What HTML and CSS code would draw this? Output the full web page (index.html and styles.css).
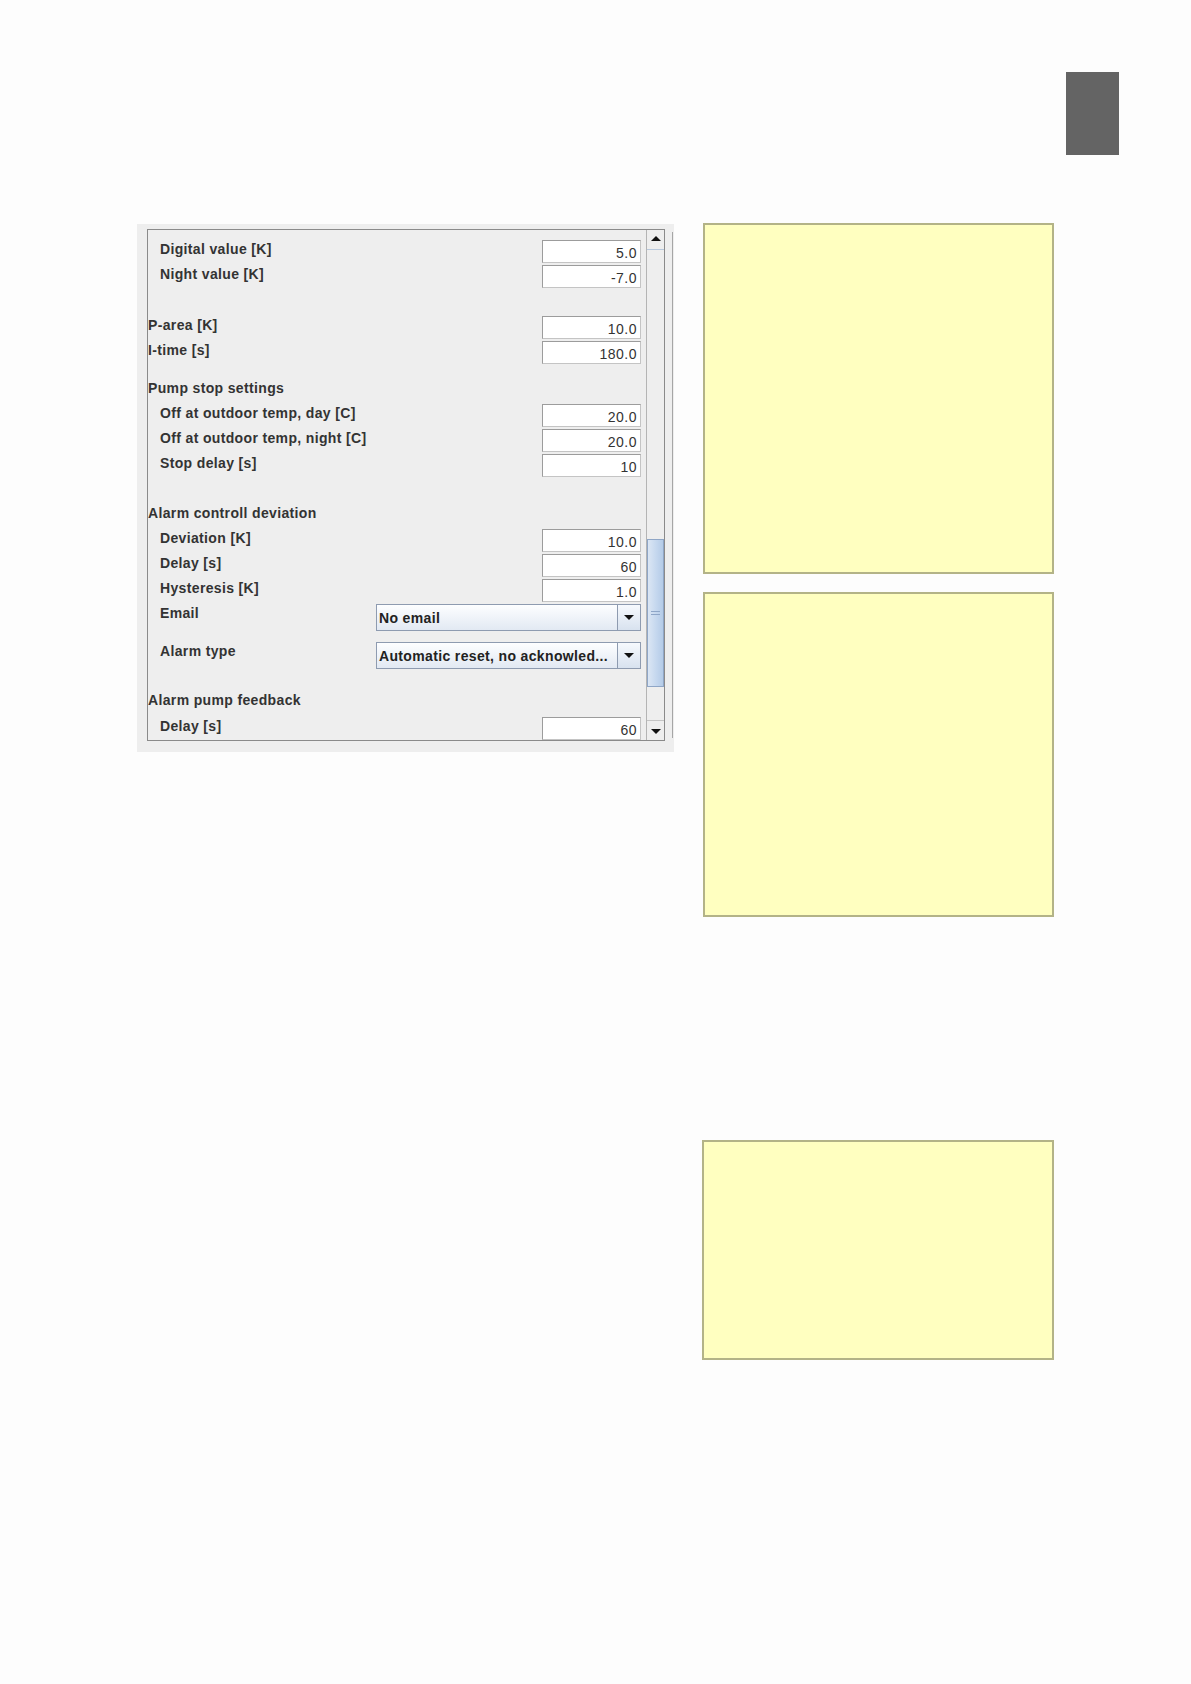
FILE: index.html
```html
<!DOCTYPE html>
<html lang="en">
<head>
  <meta charset="UTF-8">
  <meta name="viewport" content="width=device-width, initial-scale=1.0">
  <title>Controller settings</title>
  <link rel="stylesheet" href="styles.css">
</head>
<body>
  <div id="page">
    <div class="tab-row">
      <div class="tab"></div>
    </div>

    <div id="content">
      <div id="panel">
        <div class="scrollpane">
          <div class="viewport">
            <div class="row sub"><span class="label">Digital value [K]</span><div class="field">5.0</div></div>
            <div class="row sub"><span class="label">Night value [K]</span><div class="field">-7.0</div></div>
            <div class="spacer"></div>
            <div class="row"><span class="label">P-area [K]</span><div class="field">10.0</div></div>
            <div class="row"><span class="label">I-time [s]</span><div class="field">180.0</div></div>

            <div class="row heading first"><span class="label">Pump stop settings</span></div>
            <div class="row sub"><span class="label">Off at outdoor temp, day [C]</span><div class="field">20.0</div></div>
            <div class="row sub"><span class="label">Off at outdoor temp, night [C]</span><div class="field">20.0</div></div>
            <div class="row sub"><span class="label">Stop delay [s]</span><div class="field">10</div></div>
            <div class="spacer short"></div>

            <div class="row heading"><span class="label">Alarm controll deviation</span></div>
            <div class="row sub"><span class="label">Deviation [K]</span><div class="field">10.0</div></div>
            <div class="row sub"><span class="label">Delay [s]</span><div class="field">60</div></div>
            <div class="row sub"><span class="label">Hysteresis [K]</span><div class="field">1.0</div></div>
            <div class="row sub tall">
              <span class="label">Email</span>
              <div class="combo"><span class="combo-text">No email</span><span class="combo-btn"><i class="tri-down"></i></span></div>
            </div>
            <div class="row sub tall">
              <span class="label">Alarm type</span>
              <div class="combo"><span class="combo-text">Automatic reset, no acknowled...</span><span class="combo-btn"><i class="tri-down"></i></span></div>
            </div>

            <div class="row heading last"><span class="label">Alarm pump feedback</span></div>
            <div class="row sub"><span class="label">Delay [s]</span><div class="field">60</div></div>
          </div>

          <div class="scrollbar">
            <div class="sb-btn up"><i class="tri-up"></i></div>
            <div class="sb-track">
              <div class="sb-thumb"><span class="grip"></span></div>
            </div>
            <div class="sb-btn down"><i class="tri-down"></i></div>
          </div>
        </div>
        <div class="edge-line"></div>
      </div>

      <div id="notes">
        <div class="note big"></div>
        <div class="note mid"></div>
        <div class="note small"></div>
      </div>
    </div>
  </div>
</body>
</html>
```

FILE: styles.css
```css
*{
  margin: 0;
  padding: 0;
  box-sizing: border-box;
}
body {
  background-color: #fdfdfd;
  font-family: "Liberation Sans", Arial, sans-serif;
  color: #333;
}

#page {
  width: 1191px;
  padding-top: 72px;
}

.tab-row {
  display: flex;
  justify-content: flex-end;
  padding-right: 72px;
}
.tab {
  width: 53px;
  height: 83px;
  background-color: #646464;
}

#content {
  display: flex;
  align-items: flex-start;
  margin-top: 69px;
  padding-left: 137px;
}

/* settings panel */
#panel {
  width: 537px;
  height: 528px;
  background-color: #eeeeee;
  padding: 5px 0 0 10px;
  display: flex;
  align-items: flex-start;
}

.scrollpane {
  width: 518px;
  height: 512px;
  border: 1px solid #8a8a8a;
  display: flex;
  background-color: #eeeeee;
}

.viewport {
  flex: 1;
  overflow: hidden;
  padding-top: 10px;
}

.edge-line {
  width: 1px;
  height: 506px;
  margin: 3px 0 0 7px;
  background-color: #a6a6a6;
}

.row {
  display: flex;
  align-items: flex-start;
  height: 25px;
  padding-right: 5px;
}
.row.sub {
  padding-left: 12px;
}
.row.tall {
  height: 38px;
}
.row.heading.first {
  margin-top: 13px;
}
.row.heading.last {
  margin-top: 11px;
  height: 26px;
}

.label {
  font-size: 14px;
  font-weight: bold;
  letter-spacing: 0.35px;
  line-height: 19px;
  color: #333;
  white-space: nowrap;
}

.spacer {
  height: 26px;
}
.spacer.short {
  height: 25px;
}

.field {
  margin-left: auto;
  width: 99px;
  height: 23px;
  background-color: #fff;
  border: 1px solid #9c9c9c;
  border-right-color: #c4c4c4;
  border-bottom-color: #c4c4c4;
  text-align: right;
  padding: 3px 3px 0 0;
  font-size: 14px;
  line-height: 19px;
  letter-spacing: 0.5px;
  color: #333;
}

/* combo boxes */
.combo {
  margin-left: auto;
  width: 265px;
  height: 27px;
  border: 1px solid #8e9bb0;
  background: linear-gradient(#fdfeff, #e2e9f3);
  display: flex;
  align-items: stretch;
}
.combo-text {
  flex: 1;
  overflow: hidden;
  white-space: nowrap;
  padding: 4px 0 0 2px;
  font-size: 14px;
  font-weight: bold;
  letter-spacing: 0.35px;
  line-height: 18px;
  color: #222;
}
.combo-btn {
  width: 23px;
  border-left: 1px solid #8e9bb0;
  background: linear-gradient(#f6f9fd, #d8e2ef);
  display: flex;
  align-items: center;
  justify-content: center;
}

.tri-down {
  width: 0;
  height: 0;
  border-left: 5px solid transparent;
  border-right: 5px solid transparent;
  border-top: 5px solid #111;
}
.tri-up {
  width: 0;
  height: 0;
  border-left: 5px solid transparent;
  border-right: 5px solid transparent;
  border-bottom: 5px solid #111;
}

/* scrollbar */
.scrollbar {
  width: 18px;
  display: flex;
  flex-direction: column;
  border-left: 1px solid #b4b4b4;
  background-color: #eeeeee;
}
.sb-btn {
  height: 20px;
  display: flex;
  justify-content: center;
  background-color: #eeeeee;
}
.sb-btn.up {
  align-items: flex-start;
  padding-top: 6px;
  border-bottom: 1px solid #b8c8dc;
}
.sb-btn.down {
  align-items: flex-end;
  padding-bottom: 6px;
  border-top: 1px solid #c4c4c4;
}
.sb-track {
  flex: 1;
  padding-top: 289px;
}
.sb-thumb {
  height: 148px;
  border: 1px solid #8fa6c6;
  background: linear-gradient(90deg, #dbe6f4, #c3d6ee 60%, #b4cbe7);
  display: flex;
  align-items: center;
  justify-content: center;
}
.grip {
  width: 9px;
  height: 4px;
  border-top: 1px solid #8ea6c8;
  border-bottom: 1px solid #8ea6c8;
}

/* yellow note boxes */
#notes {
  margin-left: 29px;
  display: flex;
  flex-direction: column;
  width: 351px;
}
.note {
  background-color: #ffffc0;
  border: 2px solid #b3b387;
}
.note.big {
  margin-top: -1px;
  height: 351px;
}
.note.mid {
  margin-top: 18px;
  height: 325px;
}
.note.small {
  margin-top: 223px;
  margin-left: -1px;
  height: 220px;
}
```
